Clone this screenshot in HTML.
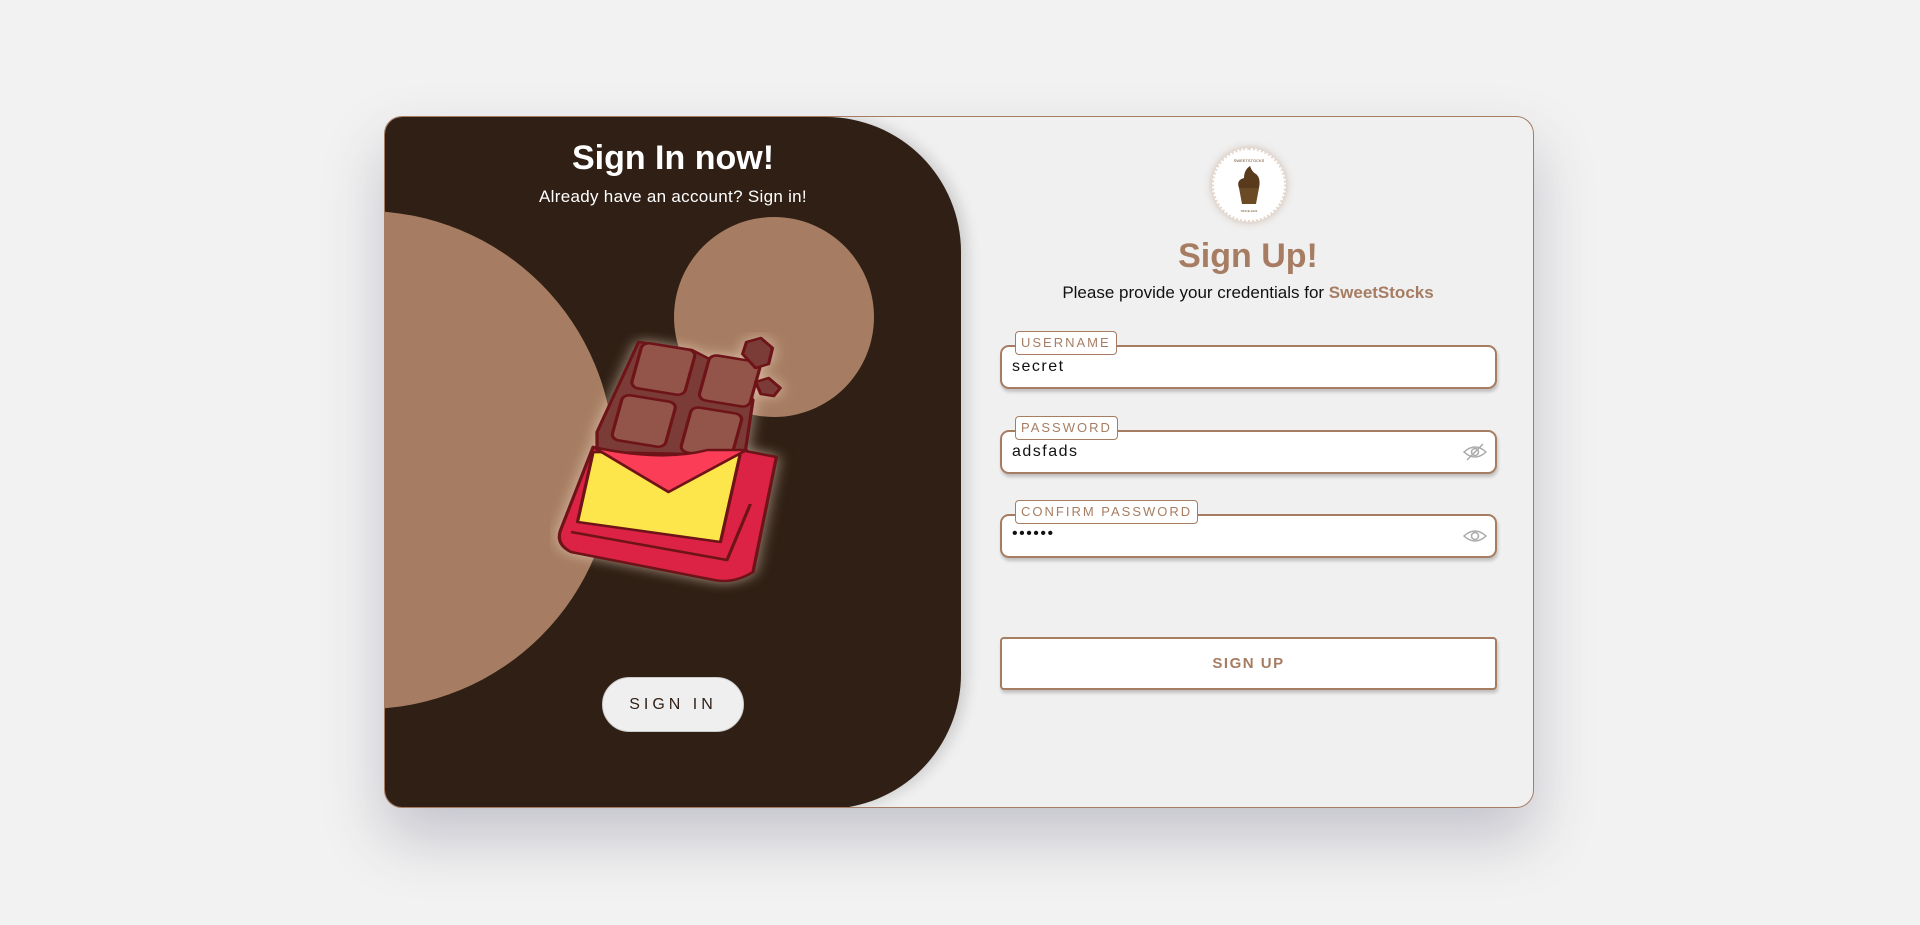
<!DOCTYPE html>
<html><head><meta charset="utf-8"><style>
*{box-sizing:border-box;margin:0;padding:0}
body{width:1920px;height:925px;background:#f2f2f2;font-family:"Liberation Sans",sans-serif;position:relative;overflow:hidden}
.card{position:absolute;left:384px;top:116px;width:1150px;height:692px;background:#f0f0f0;border:1px solid #a67d62;border-radius:18px;box-shadow:0 30px 60px rgba(60,60,90,.25);overflow:hidden}
.left{position:absolute;left:0;top:0;width:576px;height:692px;background:#2f1f14;border-radius:14px 135px 135px 14px;overflow:hidden;box-shadow:6px 0 14px rgba(0,0,0,.15)}
.c1{position:absolute;left:-269px;top:94px;width:498px;height:498px;border-radius:50%;background:#a67d62}
.c2{position:absolute;left:289px;top:100px;width:200px;height:200px;border-radius:50%;background:#a67d62}
.lt{position:absolute;left:0;width:576px;text-align:center;color:#fff}
.btn-in{position:absolute;left:217px;top:560px;width:142px;height:55px;border-radius:28px;background:#efefef;border:1px solid #ccc;color:#2f1f14;font-size:16px;letter-spacing:4px;text-align:center;line-height:53px}
.rt{position:absolute;left:576px;width:574px;text-align:center}
.logo{position:absolute;left:827px;top:31px;width:74px;height:74px;border-radius:50%;background:#fff;border:2px dotted #e8d8cc;box-shadow:0 0 8px rgba(166,125,98,.5)}
.field{position:absolute;left:615px;width:497px;height:44px;border:2px solid #a67d62;border-radius:9px;background:#fff;box-shadow:1px 3px 3px rgba(0,0,0,.2)}
.lab{position:absolute;left:13px;top:-16px;background:#fff;border:1px solid #a67d62;border-radius:4px;color:#a67d62;font-size:13px;letter-spacing:2px;padding:3px 5px;line-height:16px}
.val{position:absolute;left:10px;top:11px;font-size:16px;letter-spacing:1.5px;color:#111}
.eye{position:absolute;right:8px;top:10px}
.btn-up{position:absolute;left:615px;top:520px;width:497px;height:53px;border:2px solid #a67d62;border-radius:4px;background:#fff;color:#a67d62;font-weight:bold;font-size:15px;letter-spacing:1.5px;text-align:center;line-height:49px;box-shadow:1px 3px 3px rgba(0,0,0,.2)}
</style></head><body>
<div class="card">
 <div class="left">
  <div class="c1"></div><div class="c2"></div>
  <div class="lt" style="top:22px;font-size:34px;font-weight:bold">Sign In now!</div>
  <div class="lt" style="top:70px;font-size:17px;letter-spacing:.3px">Already have an account? Sign in!</div>
  <svg style="position:absolute;left:165px;top:215px" width="260" height="270" viewBox="0 0 260 270">
   <g transform="translate(-5,0) scale(1.3,1)">
   <g stroke="#6e1418" stroke-width="2.5" stroke-linejoin="round" style="filter:drop-shadow(0 0 6px rgba(255,230,210,.6))">
    <path d="M72 10 L113 18 L128 28 L140 32 L160 68 L150 155 L40 130 L40 100 Z" fill="#7b3b36"/>
    <rect x="70" y="14" width="42" height="46" rx="6" fill="#93544a" transform="rotate(12 91 37)"/>
    <rect x="122" y="26" width="40" height="46" rx="6" fill="#93544a" transform="rotate(12 142 49)"/>
    <rect x="55" y="66" width="42" height="46" rx="6" fill="#93544a" transform="rotate(12 76 89)"/>
    <rect x="108" y="78" width="40" height="46" rx="6" fill="#93544a" transform="rotate(12 128 101)"/>
    <path d="M155 10 L166 6 L175 16 L172 32 L162 36 L152 22 Z" fill="#7b3b36"/>
    <path d="M162 50 L172 46 L181 56 L176 64 L166 62 Z" fill="#7b3b36"/>
    <path d="M37 115 Q90 135 150 118 L178 125 L160 240 Q145 252 130 248 L20 220 Q8 212 12 198 Z" fill="#dc2346"/>
    <path d="M37 120 L150 123 L135 210 L25 190 Z" fill="#fde64b"/>
    <path d="M37 115 L95 160 L155 118 L125 118 Q90 130 37 115 Z" fill="#fb3d58"/>
    <path d="M20 200 L140 228 L158 172" fill="none"/>
   </g></g>
  </svg>
  <div class="btn-in">SIGN IN</div>
 </div>
 <div class="logo">
  <svg width="70" height="70" viewBox="0 0 70 70"><path d="M25 38 Q22 30 30 28 Q30 20 36 16 Q38 22 42 24 Q47 28 45 38 Z" fill="#5a3a1c"/><path d="M25 38 H45 L42 54 H28 Z" fill="#6b4a26"/><text x="35" y="62" font-size="3" text-anchor="middle" fill="#6b4a26">SINCE 2024</text><text x="35" y="12" font-size="4" text-anchor="middle" fill="#6b4a26">SWEETSTOCKS</text></svg>
 </div>
 <div class="rt" style="top:120px;font-size:34px;font-weight:bold;color:#a67d62">Sign Up!</div>
 <div class="rt" style="top:166px;font-size:17px;color:#111">Please provide your credentials for <b style="color:#a67d62">SweetStocks</b></div>
 <div class="field" style="top:228px"><div class="lab">USERNAME</div><div class="val">secret</div></div>
 <div class="field" style="top:313px"><div class="lab">PASSWORD</div><div class="val">adsfads</div>
  <svg class="eye" width="24" height="20" viewBox="0 0 24 20" fill="none" stroke="#aaa" stroke-width="1.5"><path d="M1 10 Q12 0 23 10 Q12 20 1 10Z"/><circle cx="12" cy="10" r="3.5"/><path d="M4 18 L20 2"/></svg></div>
 <div class="field" style="top:397px"><div class="lab">CONFIRM PASSWORD</div><div class="val" style="top:9px">••••••</div>
  <svg class="eye" width="24" height="20" viewBox="0 0 24 20" fill="none" stroke="#aaa" stroke-width="1.5"><path d="M1 10 Q12 0 23 10 Q12 20 1 10Z"/><circle cx="12" cy="10" r="3.5"/></svg></div>
 <div class="btn-up">SIGN UP</div>
</div>
</body></html>
